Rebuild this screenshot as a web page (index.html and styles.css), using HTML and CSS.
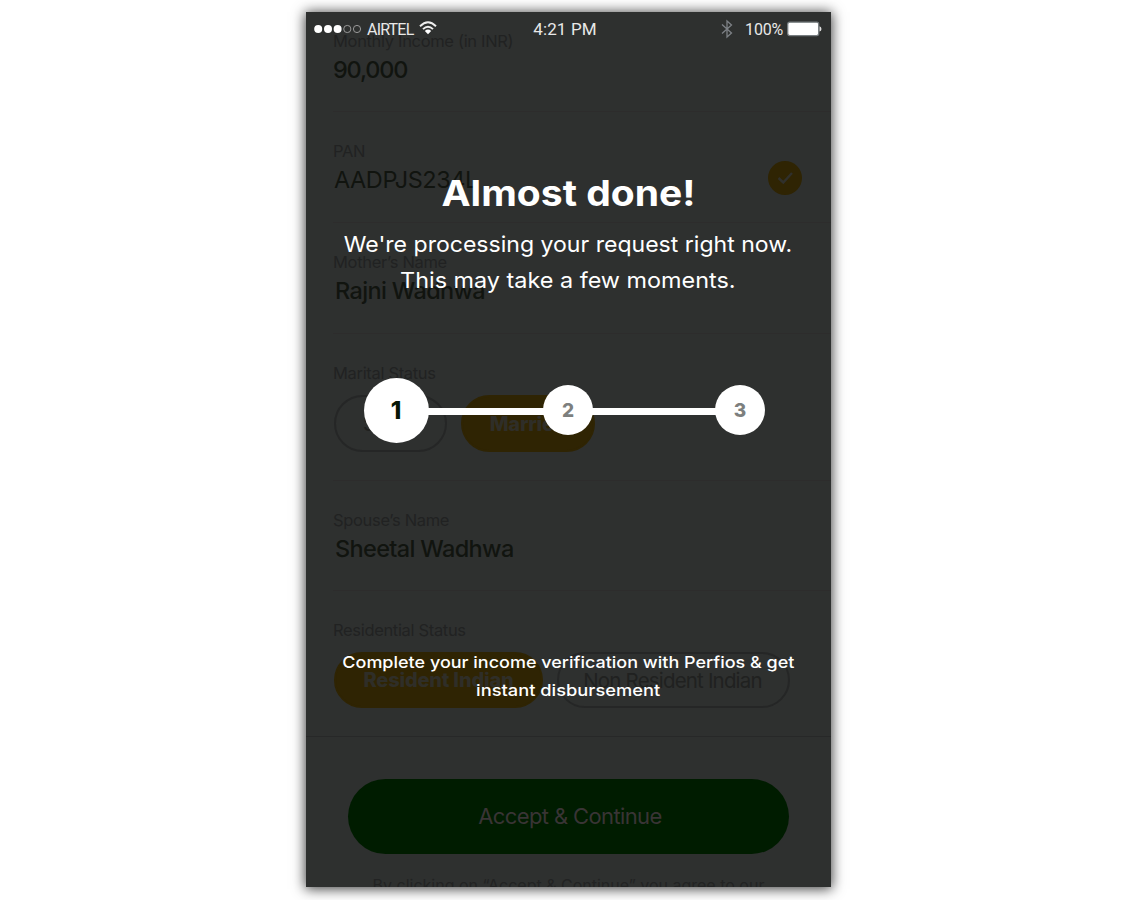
FILE: index.html
```html
<!DOCTYPE html>
<html lang="en">
<head>
<meta charset="utf-8">
<title>Almost done!</title>
<link rel="stylesheet" href="styles.css">
</head>
<body>
<main class="phone">
  <div class="form">
    <section class="field field-income"><div class="label">Monthly Income (in INR)</div><div class="value v-income">90,000</div></section>
    <section class="field field-pan">
      <div><div class="label">PAN</div><div class="value v-pan">AADPJS234L</div></div>
      <svg class="check" width="36" height="36" viewBox="0 0 36 36"><circle cx="18" cy="18" r="17" fill="#2f2403"/><path d="M11.500 18l4.800 4.500 8.700-9.500" fill="none" stroke="#30302c" stroke-width="2.400"/></svg>
    </section>
    <section class="field field-mother"><div class="label">Mother’s Name</div><div class="value">Rajni Wadhwa</div></section>
    <section class="field field-marital"><div class="label">Marital Status</div>
      <div class="pills"><span class="pill pill-single"><span>Single</span></span><span class="pill pill-on pill-married"><span>Married</span></span></div>
    </section>
    <section class="field field-spouse"><div class="label">Spouse’s Name</div><div class="value">Sheetal Wadhwa</div></section>
    <section class="field field-resident"><div class="label">Residential Status</div>
      <div class="pills"><span class="pill pill-on pill-resident"><span>Resident Indian</span></span><span class="pill pill-nri"><span>Non Resident Indian</span></span></div>
    </section>
    <div class="actions">
      <div class="accept"><span>Accept &amp; Continue</span></div>
      <div class="terms"><span>By clicking on “Accept &amp; Continue” you agree to our</span></div>
    </div>
  </div>

  <div class="overlay">
    <header class="status">
      <div class="carrier">
        <svg width="48" height="12" viewBox="0 0 48 12"><g fill="#fff"><circle cx="4.200" cy="6" r="4"/><circle cx="14" cy="6" r="4"/><circle cx="23.600" cy="6" r="4"/></g><g fill="none" stroke="#999" stroke-width="1"><circle cx="33.300" cy="6" r="3.600"/><circle cx="43" cy="6" r="3.600"/></g></svg>
        <span class="airtel">AIRTEL</span>
        <svg class="wifi" width="18" height="14" viewBox="0 0 18 14"><g fill="none" stroke="#eee" stroke-width="1.900"><path d="M1 5.200Q9-2.600 17 5.200"/><path d="M4 8.100Q9 3.300 14 8.100"/></g><path d="M5.800 10Q9 7.100 12.200 10L9 13.300z" fill="#fff"/></svg>
      </div>
      <div class="time">4:21 PM</div>
      <div class="power">
        <svg width="12" height="20" viewBox="0 0 12 20"><path d="M1 5.500l9.500 8.500L6 18V2l4.500 4L1 14.500" fill="none" stroke="#7d8186" stroke-width="1.300"/></svg>
        <span class="pct">100%</span>
        <svg class="battery" width="35" height="16" viewBox="0 0 35 16"><rect x=".7" y="1.200" width="31" height="13.400" rx="2" fill="#fff" stroke="#777d80" stroke-width="1.300"/><path d="M32.500 5.300q2 .6 2 2.600t-2 2.600z" fill="#ddd"/></svg>
      </div>
    </header>
    <h1 class="title"><span>Almost done!</span></h1>
    <p class="message"><span>We're processing your request right now.</span><br><span class="second">This may take a few moments.</span></p>
    <div class="steps">
      <div class="step step-current">1</div><div class="bar bar-first"></div><div class="step">2</div><div class="bar"></div><div class="step">3</div>
    </div>
    <p class="note"><span>Complete your income verification with Perfios &amp; get</span><br><span class="second">instant disbursement</span></p>
  </div>
</main>
</body>
</html>
```
FILE: styles.css
```css
* { box-sizing: border-box; }
body { margin: 0; height: 900px; background: #fff; overflow: hidden; font-family: Inter, "Liberation Sans", sans-serif; }
.phone { position: relative; width: 525px; height: 875px; margin: 12px 0 0 306px; background: #2e302f; box-shadow: 0 1px 12px 1px rgba(0,0,0,.75); }
.form { height: 875px; overflow: hidden; }
.field { margin-left: 27px; padding-top: 29px; border-bottom: 1px solid #2d2c2c; }
.label { height: 20px; line-height: 20px; font-size: 16.500px; letter-spacing: -.33px; color: #212222; white-space: nowrap; }
.value { height: 30px; line-height: 30px; margin: 4px 0 0 2px; font-size: 23.500px; font-weight: 500; letter-spacing: -.65px; color: #11140f; white-space: nowrap; }
.field-income { height: 100px; padding-top: 19px; }
.v-income { margin-left: 0; letter-spacing: -1.2px; }
.v-pan { margin-left: 1px; font-weight: 400; letter-spacing: -.45px; }
.field-pan { height: 111px; display: flex; justify-content: space-between; }
.check { margin: 19px 28px 0 0; }
.field-mother { height: 111px; }
.field-marital { height: 147px; }
.field-spouse { height: 110px; }
.field-resident { height: 146px; margin-left: 0; padding-left: 27px; border-color: #272828; }
.pills { display: flex; gap: 14px; margin: 12px 0 0 1px; }
.pill { display: flex; align-items: center; justify-content: center; height: 57px; border: 2px solid #252626; border-radius: 29px; font-size: 20.500px; letter-spacing: -.82px; color: #202120; white-space: nowrap; }
.pill-on { background: #2f2403; border-color: #2f2403; color: #2f2e28; font-size: 20px; font-weight: 800; letter-spacing: -.2px; }
.pill-single { width: 113px; }
.pill-married { width: 134px; }
.pill-resident { width: 209px; }
.pill-nri { width: 233px; padding-right: 2px; }
.field-resident .pill { height: 56px; }
.actions { padding: 42px 42px 0; }
.accept { height: 75px; padding: 0 0 2px 3px; border-radius: 38px; background: #001c00; display: flex; align-items: center; justify-content: center; color: #393435; font-size: 22px; letter-spacing: -.62px; }
.terms { margin-top: 21px; text-align: center; font-size: 16px; line-height: 20px; color: #222323; white-space: nowrap; }

.overlay { position: absolute; inset: 0; color: #fff; }
.status { display: grid; grid-template-columns: 1fr auto 1fr; align-items: center; height: 34px; padding: 0 9px 0 8px; font-family: Roboto, sans-serif; font-size: 16px; color: #e8e8e8; }
.carrier, .power { display: flex; align-items: center; }
.airtel { margin: 0 6px 0 5px; letter-spacing: -.8px; }
.wifi { margin-top: -2px; }
.time { margin-right: 6px; font-size: 17px; letter-spacing: .15px; }
.power { justify-content: flex-end; }
.pct { margin: 0 4px 0 12px; letter-spacing: -.2px; }
.title span, .message span, .note span { display: inline-block; }
.title { margin: 122px 0 0; height: 52px; line-height: 52px; text-align: center; font-size: 35.500px; font-weight: 700; white-space: nowrap; }
.title span { transform: scaleX(1.100); }
.message { margin: 6px 1px 0 0; text-align: center; font-size: 22px; line-height: 36px; white-space: nowrap; }
.message span { transform: scaleX(1.048); }
.message .second { transform: scaleX(1.063); }
.steps { display: flex; align-items: center; height: 66px; margin: 79px 66px 0 57.500px; }
.step { display: flex; align-items: center; justify-content: center; width: 50px; height: 50px; padding-top: 1px; border-radius: 50%; background: #fff; color: #7d7f7e; font-size: 19px; font-weight: 800; }
.step-current { width: 65px; height: 65px; color: #061605; font-size: 24px; }
.bar { flex: 1; height: 7px; margin: 2px -1px 0; background: #fff; }
.bar-first { flex: 0 0 116.500px; }
.note { margin: 205px 0 0; text-align: center; font-size: 16.500px; line-height: 28px; font-weight: 500; white-space: nowrap; }
.note span { transform: scaleX(1.090); }
.note .second { transform: scaleX(1.108); }
```
